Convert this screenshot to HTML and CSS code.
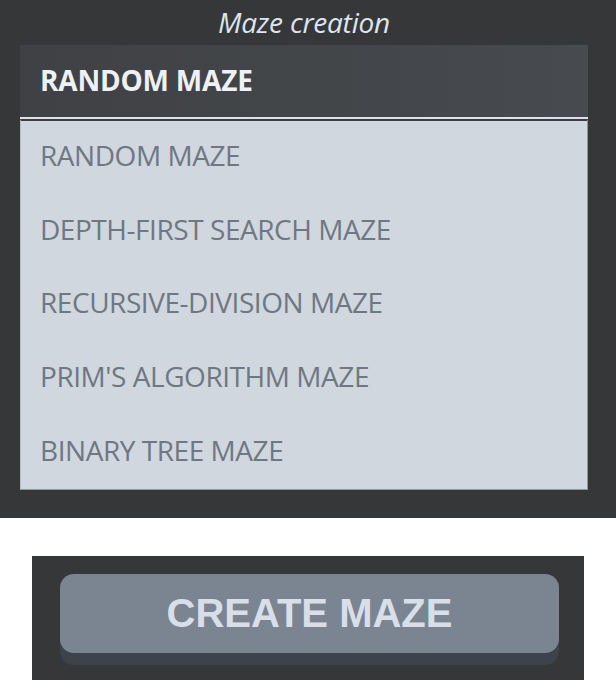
FILE: index.html
```html
<!DOCTYPE html>
<html>
<head>
<meta charset="utf-8">
<link rel="stylesheet" href="styles.css">
</head>
<body>
<section class="panel">
  <h2 class="title">Maze creation</h2>
  <div class="dropdown">
    <div class="selected">RANDOM MAZE</div>
    <ul class="options">
      <li>RANDOM MAZE</li>
      <li>DEPTH-FIRST SEARCH MAZE</li>
      <li>RECURSIVE-DIVISION MAZE</li>
      <li>PRIM'S ALGORITHM MAZE</li>
      <li>BINARY TREE MAZE</li>
    </ul>
  </div>
</section>
<section class="actions">
  <button class="create">CREATE MAZE</button>
</section>
</body>
</html>
```
FILE: styles.css
```css
html, body {
  margin: 0;
  padding: 0;
  background: #ffffff;
}
body {
  width: 616px;
  height: 680px;
  overflow: hidden;
  font-family: "Open Sans", "DejaVu Sans", sans-serif;
}
.panel {
  height: 518px;
  background: #363739;
  box-sizing: border-box;
  overflow: hidden;
}
.title {
  margin: 0;
  height: 45px;
  width: 568px;
  margin-left: 20px;
  text-align: center;
  font-style: italic;
  font-weight: 400;
  font-size: 28px;
  line-height: 44px;
  letter-spacing: -0.2px;
  color: #dfe5ee;
}
.dropdown {
  margin-left: 20px;
  width: 568px;
}
.selected {
  height: 74px;
  box-sizing: border-box;
  padding-left: 20px;
  padding-bottom: 2px;
  display: flex;
  align-items: center;
  background: linear-gradient(90deg, #3f4144 0%, #474a4e 100%);
  color: #eef1f6;
  font-weight: 700;
  font-size: 28px;
  letter-spacing: -0.2px;
  border-bottom: 2px solid #dde2e8;
}
.options {
  list-style: none;
  margin: 0;
  padding: 0;
  border-top: 2px solid #3b3d40;
  background: #d0d7df;
  border-left: 1px solid #b5bcc4;
  border-right: 1px solid #8f969e;
  border-bottom: 1px solid #8f969e;
}
.options li {
  height: 73.6px;
  box-sizing: border-box;
  padding-left: 19px;
  padding-bottom: 5px;
  display: flex;
  align-items: center;
  color: #6f7782;
  font-size: 28px;
  letter-spacing: -0.45px;
}
.actions {
  margin-top: 38px;
  margin-left: 32px;
  width: 552px;
  height: 124px;
  background: #363739;
  padding-top: 18px;
  box-sizing: border-box;
}
.create {
  display: block;
  margin-left: 28px;
  width: 499px;
  height: 79px;
  border: none;
  border-radius: 14px;
  background: #7b8591;
  box-shadow: 0 12px 0 #3d434b;
  color: #d8dfe8;
  font-family: "Liberation Sans", Arial, sans-serif;
  font-weight: 700;
  font-size: 40px;
  padding: 0;
}
```
